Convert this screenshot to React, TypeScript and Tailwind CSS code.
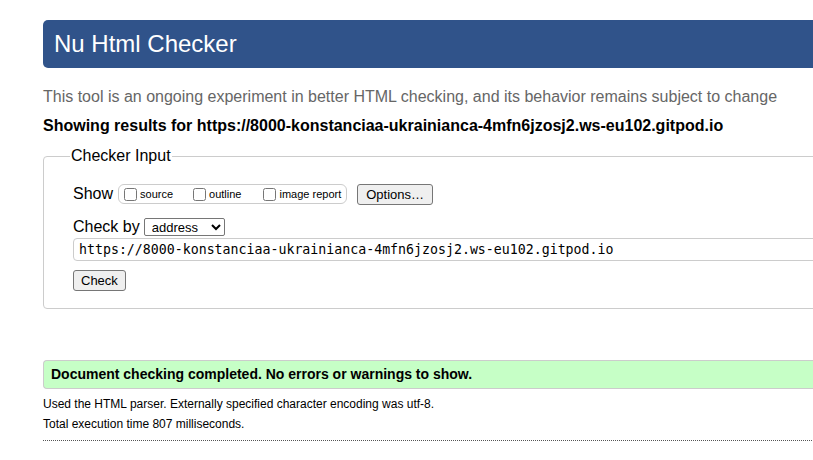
export default function App() {
  return (
    <div className="h-[460px] w-[813px] overflow-hidden bg-white font-['Liberation_Sans',Arial,sans-serif] text-black">
      <div className="w-[1000px] pl-[43px] pt-[20px]">
        <h1 className="h-[48px] rounded-l-[5px] bg-[#30538a] pl-[11px] text-[24px] leading-[48px] text-white">
          Nu Html Checker
        </h1>

        <p className="mt-[19px] text-[16px] leading-[20px] text-[#666]">
          This tool is an ongoing experiment in better HTML checking, and its behavior remains subject to change
        </p>
        <p className="mt-[9px] text-[16px] font-bold leading-[20px]">
          Showing results for https://8000-konstanciaa-ukrainianca-4mfn6jzosj2.ws-eu102.gitpod.io
        </p>

        {/* checker form */}
        <fieldset className="mt-[10px] h-[163px] rounded-[4px] border border-[#ccc] pl-[29px] pr-0">
          <legend className="-ml-[3px] px-[1px] text-[16px] leading-[20px]">Checker Input</legend>

          <div className="mt-[17px] flex h-[22px] items-center">
            <span className="text-[16px]">Show</span>
            <div className="ml-[5px] flex h-[20px] items-center rounded-[6px] border border-[#ccc] pl-[5px] pr-[5px] text-[11px]">
              <label className="flex items-center">
                <input type="checkbox" className="h-[13px] w-[13px]" />
                <span className="ml-[3px]">source</span>
              </label>
              <label className="ml-[20px] flex items-center">
                <input type="checkbox" className="h-[13px] w-[13px]" />
                <span className="ml-[3px]">outline</span>
              </label>
              <label className="ml-[22px] flex items-center">
                <input type="checkbox" className="h-[13px] w-[13px]" />
                <span className="ml-[3px]">image report</span>
              </label>
            </div>
            <button className="ml-[10px] h-[21px] rounded-[3px] border border-[#767676] bg-[#efefef] px-[8px] text-[13px] leading-[19px]">
              Options…
            </button>
          </div>

          <div className="mt-[12px] flex h-[20px] items-center">
            <span className="text-[16px]">Check by</span>
            <select className="ml-[4px] h-[18px] w-[81px] rounded-[2px] border border-[#767676] bg-white pl-[3px] text-[13px] leading-[16px]">
              <option>address</option>
            </select>
          </div>

          <div className="mt-[1px] flex h-[23px] items-center rounded-l-[4px] border border-[#ccc] pl-[5px] font-['DejaVu_Sans_Mono',monospace] text-[13.25px]">
            https://8000-konstanciaa-ukrainianca-4mfn6jzosj2.ws-eu102.gitpod.io
          </div>

          <button className="mt-[9px] h-[21px] rounded-[3px] border border-[#767676] bg-[#efefef] px-[7px] text-[13px] leading-[19px]">
            Check
          </button>
        </fieldset>

        {/* result */}
        <div className="mt-[51px] flex h-[29px] items-center rounded-l-[4px] border-y border-l border-[#ccc] bg-[#c6ffc6] pl-[7px] text-[14px] font-bold">
          Document checking completed. No errors or warnings to show.
        </div>
        <p className="mt-[8px] text-[12px] leading-[15px]">
          Used the HTML parser. Externally specified character encoding was utf-8.
        </p>
        <p className="mt-[5px] text-[12px] leading-[15px]">Total execution time 807 milliseconds.</p>
        <div className="mt-[8px] border-t border-dotted border-[#555]" />
      </div>
    </div>
  );
}
